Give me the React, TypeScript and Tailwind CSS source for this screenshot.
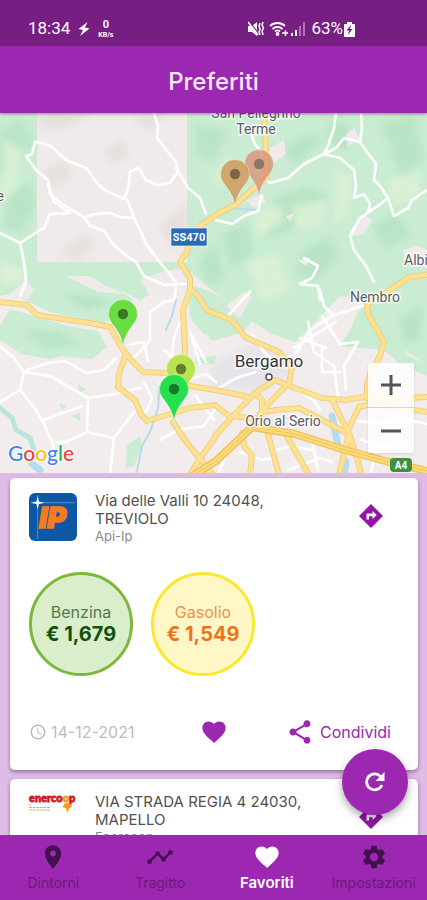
import type { ReactNode } from 'react';
import clsx from 'clsx';
import { MdAccessTime, MdFavorite, MdPlace, MdSettings, MdShare, MdTimeline } from 'react-icons/md';

type Fuel = { name: string; price: string; tone: 'green' | 'yellow' };

type Station = {
  address: string;
  city: string;
  brand: string;
  logo: ReactNode;
  fuels: Fuel[];
  date: string;
};

const FOREST = [
  'M0 113H427V300L400 292L366 300L340 296L318 320L296 342L272 334L240 314L212 290L190 272L170 282L140 300L120 290L60 284L0 296Z',
  'M8 292L60 284L120 290L133 300L118 312L104 324L84 319L50 312L34 304Z',
  'M0 326L10 309L34 316L68 326L98 331L107 347L92 359L62 356L50 359L22 354L0 340Z',
  'M188 284L212 292L252 320L244 332L212 341L200 326L190 316Z',
  'M358 312L366 300L427 288V376L400 364L386 352L380 350L340 346L350 330Z',
  'M127 445L140 436L142 446L134 466L126 468Z',
  'M195 358L216 356L214 364L196 364ZM78 384L86 390L80 392ZM60 403L66 406L62 410ZM72 416L80 412L80 421Z',
  'M190 318L206 316L215 332L204 334Z',
];

const HILLS = [
  'M0 130L20 120L32 140L18 168L0 176Z',
  'M8 196L30 182L36 204L20 232L4 226Z',
  'M196 124L226 132L214 162L196 154Z',
  'M284 150L310 132L322 140L296 166Z',
  'M272 200L306 186L330 196L300 226L268 240Z',
  'M222 234L246 222L254 252L232 268Z',
  'M302 250L330 238L338 256L316 282L296 276Z',
  'M374 226L396 214L410 236L386 250Z',
  'M330 118L352 128L346 150L328 144Z',
  'M382 124L414 116L424 160L400 176Z',
  'M200 262L216 244L224 278L206 286Z',
  'M400 318L422 304L420 338L404 344Z',
  'M24 330L60 332L80 344L44 348Z',
  'M60 292L96 296L112 304L84 310Z',
];

const LIGHT_HILLS = [
  'M4 140L24 150L14 190L2 200Z',
  'M214 176L230 150L232 166L222 190Z',
  'M292 206L326 200L322 226L296 230Z',
  'M336 170L352 176L348 214L334 226Z',
  'M246 262L278 254L290 290L262 302Z',
  'M388 180L420 172L418 200L392 206Z',
  'M254 212L280 204L284 222L258 236Z',
  'M0 262L26 270L20 284L0 286Z',
];

const TOWNS = [
  'M66 276L90 276L106 286L124 294L98 292Z',
  'M140 280L160 272L182 268L192 296L150 296Z',
  'M270 148L284 140L286 154L276 162L266 158Z',
  'M352 228L364 214L372 220L364 234L352 236Z',
  'M346 134L354 128L360 140L348 146Z',
  'M246 200L262 194L266 202L254 208Z',
  'M403 250L418 246L427 250V268L404 262Z',
  'M298 260L310 258L306 266ZM286 216L294 214L290 222Z',
  'M10 294L26 280L34 290L28 300Z',
  'M396 336L404 350L427 364L408 356Z',
  'M226 306L244 292L252 296L240 318Z',
];

const SHADES = [
  'M38 113H92L78 122L60 130L38 128Z',
  'M104 150L122 138L128 156L112 166Z',
  'M44 170L66 160L72 176L50 190Z',
  'M60 252L84 234L96 244L80 261Z',
  'M160 226L187 200V240L172 250Z',
  'M132 120L148 113H168L150 132Z',
];

const STREETS = [
  'M35 142L42 143L52 147L66 160L86 168L98 184L106 191L124 199L128 189L130 172L139 168L146 180L158 185L170 183L178 172L176 162L168 152L157 138L158 126L154 113',
  'M35 142L32 154L26 156L36 170L48 180L50 194L62 204L84 217L90 226L104 231L112 243L124 254L136 262L144 276L164 285L186 284',
  'M48 184L54 202L70 213L50 214L44 228L34 234L20 243L24 262L26 282L20 296',
  'M0 233L20 243M84 217L96 214L110 213L120 217L134 218L127 199M134 218L140 230L146 244L158 260L168 272L176 282',
  'M176 168L188 188L200 198L206 214M336 113L334 128L328 146L324 154L304 164L288 178L270 183L262 176',
  'M324 154L340 158L354 170L356 186L354 198L364 194L370 204L368 212L378 206L388 198L380 186L374 180L376 164L370 156L360 142L362 128L361 113',
  'M324 154L336 148L344 138L360 142M388 198L394 216L408 208L412 200L427 190M378 206L360 218L350 236L354 250L366 266L374 282',
  'M304 258L318 266L312 278L300 284L318 286L320 300M216 220L232 224L244 216L258 211L262 196M264 158L254 142L252 136',
  'M0 346L14 358L24 372L30 369L48 363L66 361L86 373L104 370L116 358M24 372L50 376L88 398L116 394L140 388',
  'M24 372L20 390L0 402M20 390L36 410L44 424L52 442L58 460M88 398L87 432L114 438L134 412M44 420L60 414L82 406M87 432L66 442L56 442M114 438L110 475',
  'M130 344L144 342L148 360M134 358L150 340L150 312L164 302L174 300L176 288M144 382L152 398L146 412M160 384L170 370L174 338L180 322',
  'M174 360L164 350M200 364L190 332L206 362M188 380L206 374L216 382M196 396L214 420M160 440L178 430L204 426L216 408',
  'M252 334L264 352L274 362M228 316L242 300L250 292M296 354L310 330L332 316L350 310L368 304M320 290L324 306L334 316',
  'M294 348L316 334L336 322M308 322L314 352L334 366L338 396M300 338L326 348M322 316L340 344L358 342L344 366L346 390',
  'M322 346L322 372L340 372M300 392L314 400L320 410M216 390L236 378L256 372M270 452L290 446L312 450M312 440L318 470M288 470L320 458L332 462',
  'M352 420L380 424L400 418L427 424M362 440L384 448L406 442M376 452L370 475M228 450L218 475M240 452L262 460L276 458',
];

const MAIN_ROADS = [
  'M0 302L27 305L37 315L83 322L96 324L110 327L123 350L134 363L143 372L167 373L190 386L215 390L249 397',
  'M126 354L119 374L118 387L135 400L141 414L147 421L167 415L190 408L215 405L229 416L262 419',
  'M173 422L187 443L207 467L213 475',
  'M264 113L265 130L267 177L255 187L235 205L219 213L200 226L187 243L188 250L180 262L190 278L190 290L183 310L185 350L183 370',
  'M190 289L198 296L207 310L216 314L232 320L245 337L279 352L292 367L289 383L269 403L260 414',
  'M215 436L232 417L255 393L275 380L292 387L322 398L345 400L365 397L390 399L427 397',
  'M255 393L262 400L262 412L276 410L299 408L322 420L345 432L350 426L359 407L372 404L400 408L427 412',
  'M332 400L349 433L362 475M349 433L339 475',
  'M427 275L409 277L390 290L367 305L368 314L384 342L380 356L371 372L367 385L367 398',
  'M242 433L244 446L252 456L250 475M267 430L279 475M285 433L296 452L309 475',
  'M190 475L200 458L215 438M206 475L204 464',
];

const MOTORWAY = 'M186 480L216 461L252 427L295 434L345 450L389 462L427 471';

const PINS = [
  { x: 259, y: 164, color: '#d98a70', opacity: 0.72 },
  { x: 235, y: 174, color: '#cfa062', opacity: 0.9 },
  { x: 123, y: 314, color: '#6add41', opacity: 1 },
  { x: 181, y: 369, color: '#b9e350', opacity: 1 },
  { x: 174, y: 389, color: '#25df4e', opacity: 1 },
];

const GOOGLE = [
  { char: 'G', color: '#4285f4' },
  { char: 'o', color: '#ea4335' },
  { char: 'o', color: '#fbbc05' },
  { char: 'g', color: '#4285f4' },
  { char: 'l', color: '#34a853' },
  { char: 'e', color: '#ea4335' },
];

function Shapes({ paths, fill, opacity, soft }: { paths: string[]; fill: string; opacity?: number; soft?: boolean }) {
  return (
    <g fill={fill} opacity={opacity} filter={soft ? 'url(#relief)' : undefined}>
      {paths.map((d) => (
        <path key={d} d={d} />
      ))}
    </g>
  );
}

function Roads({ paths, stroke, width }: { paths: string[]; stroke: string; width: number }) {
  return (
    <g fill="none" stroke={stroke} strokeWidth={width} strokeLinecap="round" strokeLinejoin="round">
      {paths.map((d) => (
        <path key={d} d={d} />
      ))}
    </g>
  );
}

function StationMap() {
  return (
    <svg
      viewBox="0 113 427 360"
      preserveAspectRatio="xMidYMid slice"
      className="block h-full w-full font-[Roboto,sans-serif]"
    >
      <defs>
        <filter id="relief">
          <feGaussianBlur stdDeviation="3" />
        </filter>
      </defs>
      <rect y="113" width="427" height="360" fill="#f2ecec" />
      <path d="M212 365L250 344L286 352L290 376L256 392L212 388Z" fill="#e6e4e8" filter="url(#relief)" />
      <Shapes paths={FOREST} fill="#c9ecd2" />
      <Shapes paths={HILLS} fill="#b3e1c0" opacity={0.7} soft />
      <Shapes paths={LIGHT_HILLS} fill="#dff2d6" opacity={0.8} soft />
      <rect x="37" y="113" width="150" height="149" fill="#f0ebea" />
      <Shapes paths={SHADES} fill="#e2dcda" opacity={0.7} soft />
      <Shapes paths={TOWNS} fill="#f0eaeb" />

      <g fill="none" stroke="#b5dcee" strokeLinecap="round">
        <path d="M0 408L12 418L16 430L30 438L34 450" stroke="#b9e5dc" strokeWidth="5" />
        <path d="M176 300L172 316L166 330M160 384L158 408L150 432L142 446L136 475" strokeWidth="2" />
        <path d="M32 464L40 470M332 416L338 446M346 462L344 475" strokeWidth="7" />
        <path d="M232 208L256 210" strokeWidth="2" />
      </g>

      <Roads paths={STREETS} stroke="#ffffff" width={2.6} />
      <Roads paths={MAIN_ROADS} stroke="#f1cf7c" width={6} />
      <Roads paths={MAIN_ROADS} stroke="#fde293" width={4} />
      <Roads paths={[MOTORWAY]} stroke="#efc35d" width={8} />
      <Roads paths={[MOTORWAY]} stroke="#fddc7c" width={5} />
      <path d={MOTORWAY} fill="none" stroke="#efc35d" strokeWidth="1" />

      <g
        fill="#5b5f63"
        stroke="#ffffff"
        strokeWidth="3"
        strokeOpacity="0.75"
        paintOrder="stroke"
        fontSize="14"
        textAnchor="middle"
      >
        <text x="256" y="118">San Pellegrino</text>
        <text x="256" y="134">Terme</text>
        <text x="375" y="302">Nembro</text>
        <text x="283" y="426">Orio al Serio</text>
        <text x="404" y="265" textAnchor="start">Albino</text>
        <text x="4" y="201" textAnchor="end">Lecce</text>
        <text x="269" y="367" fontSize="17" fill="#33373a">Bergamo</text>
      </g>
      <circle cx="269" cy="377" r="3" fill="#fff" stroke="#4b4f52" strokeWidth="1.4" />

      <rect x="171" y="228" width="36" height="18" fill="#2a6cb8" stroke="#fff" strokeWidth="0.6" />
      <text x="189" y="241" fill="#fff" fontSize="11" fontWeight="700" textAnchor="middle">SS470</text>
      <rect x="390" y="458" width="22" height="14" rx="4" fill="#3f9142" />
      <text x="401" y="469" fill="#fff" fontSize="10" fontWeight="700" textAnchor="middle">A4</text>

      {PINS.map((pin) => (
        <g key={pin.x} transform={`translate(${pin.x} ${pin.y})`} opacity={pin.opacity}>
          <path
            d="M0 33C-1 24 -4 19 -9 12C-12 8 -14.500 5 -14.500 0A14.500 14.500 0 0 1 14.500 0C14.500 5 12 8 9 12C4 19 1 24 0 33Z"
            fill={pin.color}
            stroke="#ffffff"
            strokeOpacity="0.5"
            strokeWidth="0.8"
          />
          <circle r="5.200" fill="#000" opacity="0.45" />
        </g>
      ))}

      <text
        x="8"
        y="461"
        fontSize="21"
        fontWeight="500"
        stroke="#ffffff"
        strokeWidth="2"
        paintOrder="stroke"
        className="font-[Lato,sans-serif]"
      >
        {GOOGLE.map((letter, i) => (
          <tspan key={i} fill={letter.color}>{letter.char}</tspan>
        ))}
      </text>
    </svg>
  );
}

function IpLogo() {
  return (
    <svg viewBox="0 0 47 47" className="w-full">
      <rect width="47" height="47" rx="6" fill="#0d57a5" />
      <path d="M2 9.500H45M8.500 2V45" stroke="#6ea6dc" strokeWidth="1" opacity="0.7" />
      <text
        x="23"
        y="34"
        fill="#f47b20"
        stroke="#f47b20"
        strokeWidth="1.500"
        fontSize="28"
        fontWeight="900"
        fontStyle="italic"
        textAnchor="middle"
        className="font-[Inter,sans-serif]"
      >
        IP
      </text>
      <path d="M8.500 3L9.700 8.300L15 9.500L9.700 10.700L8.500 16L7.300 10.700L2 9.500L7.300 8.300Z" fill="#fff" />
    </svg>
  );
}

function EnercoopLogo() {
  return (
    <svg viewBox="0 0 48 20" className="w-full overflow-visible">
      <text x="0" y="8" fill="#d3141b" stroke="#d3141b" strokeWidth="0.8" fontSize="11" fontWeight="900" className="font-[Lato,sans-serif]">
        enerco<tspan fill="#f39a1d" stroke="#f39a1d">o</tspan>p
      </text>
      <g stroke="#f0ab45" strokeWidth="1.200" strokeDasharray="3 0.6">
        <path d="M0 11H2M0 13.500H21M0 16H21" />
      </g>
      <path d="M34 12C35 8 42 8 43 12C42 14 40 14 40 14L39 18H38L37 14C35 14 34 13 34 12Z" fill="#f39a1d" />
    </svg>
  );
}

function DirectionsIcon() {
  return (
    <svg viewBox="0 0 24 24" className="size-6">
      <path d="M12 0L24 12L12 24L0 12Z" fill="currentColor" />
      <path d="M7.500 15.500V10.500Q7.500 9.500 8.500 9.500H13.500V7L17.700 11L13.500 15V12.300H10V15.500Z" fill="#fff" />
    </svg>
  );
}

function RefreshIcon() {
  return (
    <svg viewBox="0 0 20 20" className="size-5">
      <path d="M17 13A8 8 0 1 1 15.500 4.300" fill="none" stroke="currentColor" strokeWidth="2.800" />
      <path d="M19.500 0V9H10.500Z" fill="currentColor" />
    </svg>
  );
}

const STATIONS: Station[] = [
  {
    address: 'Via delle Valli 10 24048,',
    city: 'TREVIOLO',
    brand: 'Api-Ip',
    logo: <IpLogo />,
    fuels: [
      { name: 'Benzina', price: '€ 1,679', tone: 'green' },
      { name: 'Gasolio', price: '€ 1,549', tone: 'yellow' },
    ],
    date: '14-12-2021',
  },
  {
    address: 'VIA STRADA REGIA 4 24030,',
    city: 'MAPELLO',
    brand: 'Enercoop',
    logo: <EnercoopLogo />,
    fuels: [],
    date: '14-12-2021',
  },
];

function FuelBadge({ fuel }: { fuel: Fuel }) {
  const green = fuel.tone === 'green';
  return (
    <div
      className={clsx(
        'flex size-[104px] flex-col items-center justify-center rounded-full border-3 pb-1',
        green ? 'border-[#7cb83a] bg-[#dbeecb]' : 'border-[#fbe72c] bg-[#fff8c6]',
      )}
    >
      <span className={clsx('text-base leading-6', green ? 'text-[#56764f]' : 'text-[#ee9050]')}>
        {fuel.name}
      </span>
      <span className={clsx('text-xl leading-5 font-bold', green ? 'text-[#12520f]' : 'text-[#f0731c]')}>
        {fuel.price}
      </span>
    </div>
  );
}

function StationCard({ station }: { station: Station }) {
  return (
    <article className="rounded-[5px] bg-white px-[19px] pt-[14px] pb-6 shadow-[0_2px_4px_rgba(60,20,70,0.45)]">
      <div className="flex">
        <div className="w-12 shrink-0 pt-px">{station.logo}</div>
        <div className="ml-[18px] flex-1 text-[15px] leading-[18px] text-[#505050]">
          <h2>
            {station.address}
            <br />
            {station.city}
          </h2>
          <p className="text-[13px] leading-4 text-[#8b8b8b]">{station.brand}</p>
        </div>
        <button type="button" aria-label="Indicazioni" className="mt-3 mr-4 self-start text-[#9217a5]">
          <DirectionsIcon />
        </button>
      </div>

      <div className="mt-7 flex gap-[18px]">
        {station.fuels.map((fuel) => (
          <FuelBadge key={fuel.name} fuel={fuel} />
        ))}
      </div>

      <div className="mt-[42px] mr-2 flex items-center justify-between text-base text-[#9c27b0]">
        <time className="flex items-center gap-1 whitespace-nowrap text-[#bdbdbd]">
          <MdAccessTime size={18} />
          {station.date}
        </time>
        <button type="button" aria-label="Preferito" className="ml-2">
          <MdFavorite size={28} />
        </button>
        <button type="button" className="flex items-center gap-1.5">
          <MdShare size={28} className="shrink-0" />
          Condividi
        </button>
      </div>
    </article>
  );
}

const TABS = [
  { label: 'Dintorni', icon: MdPlace },
  { label: 'Tragitto', icon: MdTimeline },
  { label: 'Favoriti', icon: MdFavorite, active: true },
  { label: 'Impostazioni', icon: MdSettings },
];

function StatusBar() {
  return (
    <div className="flex h-[46px] items-center bg-[#761e82] px-7 pt-3 font-[Roboto,sans-serif] text-[17px] text-white">
      <span>18:34</span>
      <svg viewBox="0 0 12 16" className="ml-2 h-4 w-3" fill="currentColor">
        <path d="M9.500 1L0.500 8L5 9L2 15L11.500 7.500L7 6.500Z" />
      </svg>
      <span className="ml-2 flex flex-col items-center text-[7px] leading-2 font-bold">
        <span className="text-[11px] leading-3">0</span>
        <span>KB/s</span>
      </span>

      <div className="mr-11 ml-auto flex items-center">
        <svg viewBox="0 0 17 16" className="mr-1 h-4 w-[17px]" fill="currentColor">
          <path d="M0 5H4L9 1V15L4 11H0Z" />
          <path d="M1 0L11 13" stroke="#761e82" strokeWidth="1.200" />
          <path d="M0 1L10 14" stroke="currentColor" strokeWidth="1.500" />
          <path d="M12 2L11 5L12 8L11 11L12 14M15 1L14 4L15.500 7L14 10L15 14" fill="none" stroke="currentColor" strokeWidth="1.500" />
        </svg>
        <svg viewBox="0 0 20 16" className="mr-0.5 h-4 w-5" fill="none" stroke="currentColor" strokeWidth="1.800">
          <path d="M1 5C5 1 12 1 16 5M3.500 8C6.500 5.300 10.500 5.300 13.500 8M6 10.500C7.500 9.200 9.500 9.200 11 10.500" />
          <circle cx="8.500" cy="13" r="1" fill="currentColor" />
          <path d="M13 12H19M16.500 9.500V15" strokeWidth="1.500" />
        </svg>
        <svg viewBox="0 0 14 16" className="mr-1.5 h-4 w-[14px]" fill="currentColor">
          <path d="M0 12H2V15H0ZM4 9H6V15H4Z" />
          <path d="M8 5H10V15H8ZM12 1H14V15H12Z" opacity="0.4" />
        </svg>
        <span>63%</span>
        <svg viewBox="0 0 11 15" className="ml-px h-[15px] w-[11px]">
          <path d="M3 0H8V2H10Q11 2 11 3V14Q11 15 10 15H1Q0 15 0 14V3Q0 2 1 2H3Z" fill="#fff" />
          <path d="M7 3L2.500 8.500H5L4 13L8.500 7H6Z" fill="#761e82" />
        </svg>
      </div>
    </div>
  );
}

export default function App() {
  return (
    <div className="flex h-screen flex-col overflow-hidden bg-[#dfbce8] font-[Inter,sans-serif]">
      <header className="relative z-10 shrink-0 bg-[#9c27b0] shadow-[0_1px_3px_rgba(0,0,0,0.4)]">
        <StatusBar />
        <h1 className="flex h-[67px] items-center justify-center pt-1 text-2xl font-medium text-[#fbe6ff]">
          Preferiti
        </h1>
      </header>

      <section className="relative h-[40vh] shrink-0">
        <StationMap />
        <div className="absolute right-[13px] bottom-5 flex w-[46px] flex-col divide-y divide-gray-300 rounded-xs bg-white/85 text-[#555] shadow">
          <button type="button" aria-label="Ingrandisci" className="flex h-[45px] items-center justify-center">
            <svg viewBox="0 0 20 20" className="size-5" stroke="currentColor" strokeWidth="3">
              <path d="M0 10H20M10 0V20" />
            </svg>
          </button>
          <button type="button" aria-label="Riduci" className="flex h-[45px] items-center justify-center">
            <svg viewBox="0 0 20 20" className="size-5" stroke="currentColor" strokeWidth="3">
              <path d="M0 10H20" />
            </svg>
          </button>
        </div>
      </section>

      <main className="relative min-h-0 flex-1">
        <div className="flex h-full flex-col gap-[9px] overflow-hidden pt-[5px] pr-[9px] pl-[10px] *:shrink-0">
          {STATIONS.map((station) => (
            <StationCard key={station.city} station={station} />
          ))}
        </div>
        <button
          type="button"
          aria-label="Aggiorna"
          className="absolute right-[19px] bottom-5 flex size-[66px] items-center justify-center rounded-full bg-[#9c27b0] text-white shadow-[0_4px_8px_rgba(0,0,0,0.35)]"
        >
          <RefreshIcon />
        </button>
      </main>

      <nav className="z-10 grid h-[65px] shrink-0 grid-cols-4 bg-[#9c27b0]">
        {TABS.map(({ label, icon: Icon, active }) => (
          <a
            key={label}
            href={`#${label.toLowerCase()}`}
            className={clsx(
              'flex flex-col items-center pt-2',
              active ? 'text-[15px] font-semibold text-white' : 'text-sm text-[#6e1a7d]',
            )}
          >
            <Icon size={28} className={active ? 'text-white' : 'text-[#430f4d]'} />
            <span className="leading-6">{label}</span>
          </a>
        ))}
      </nav>
    </div>
  );
}
